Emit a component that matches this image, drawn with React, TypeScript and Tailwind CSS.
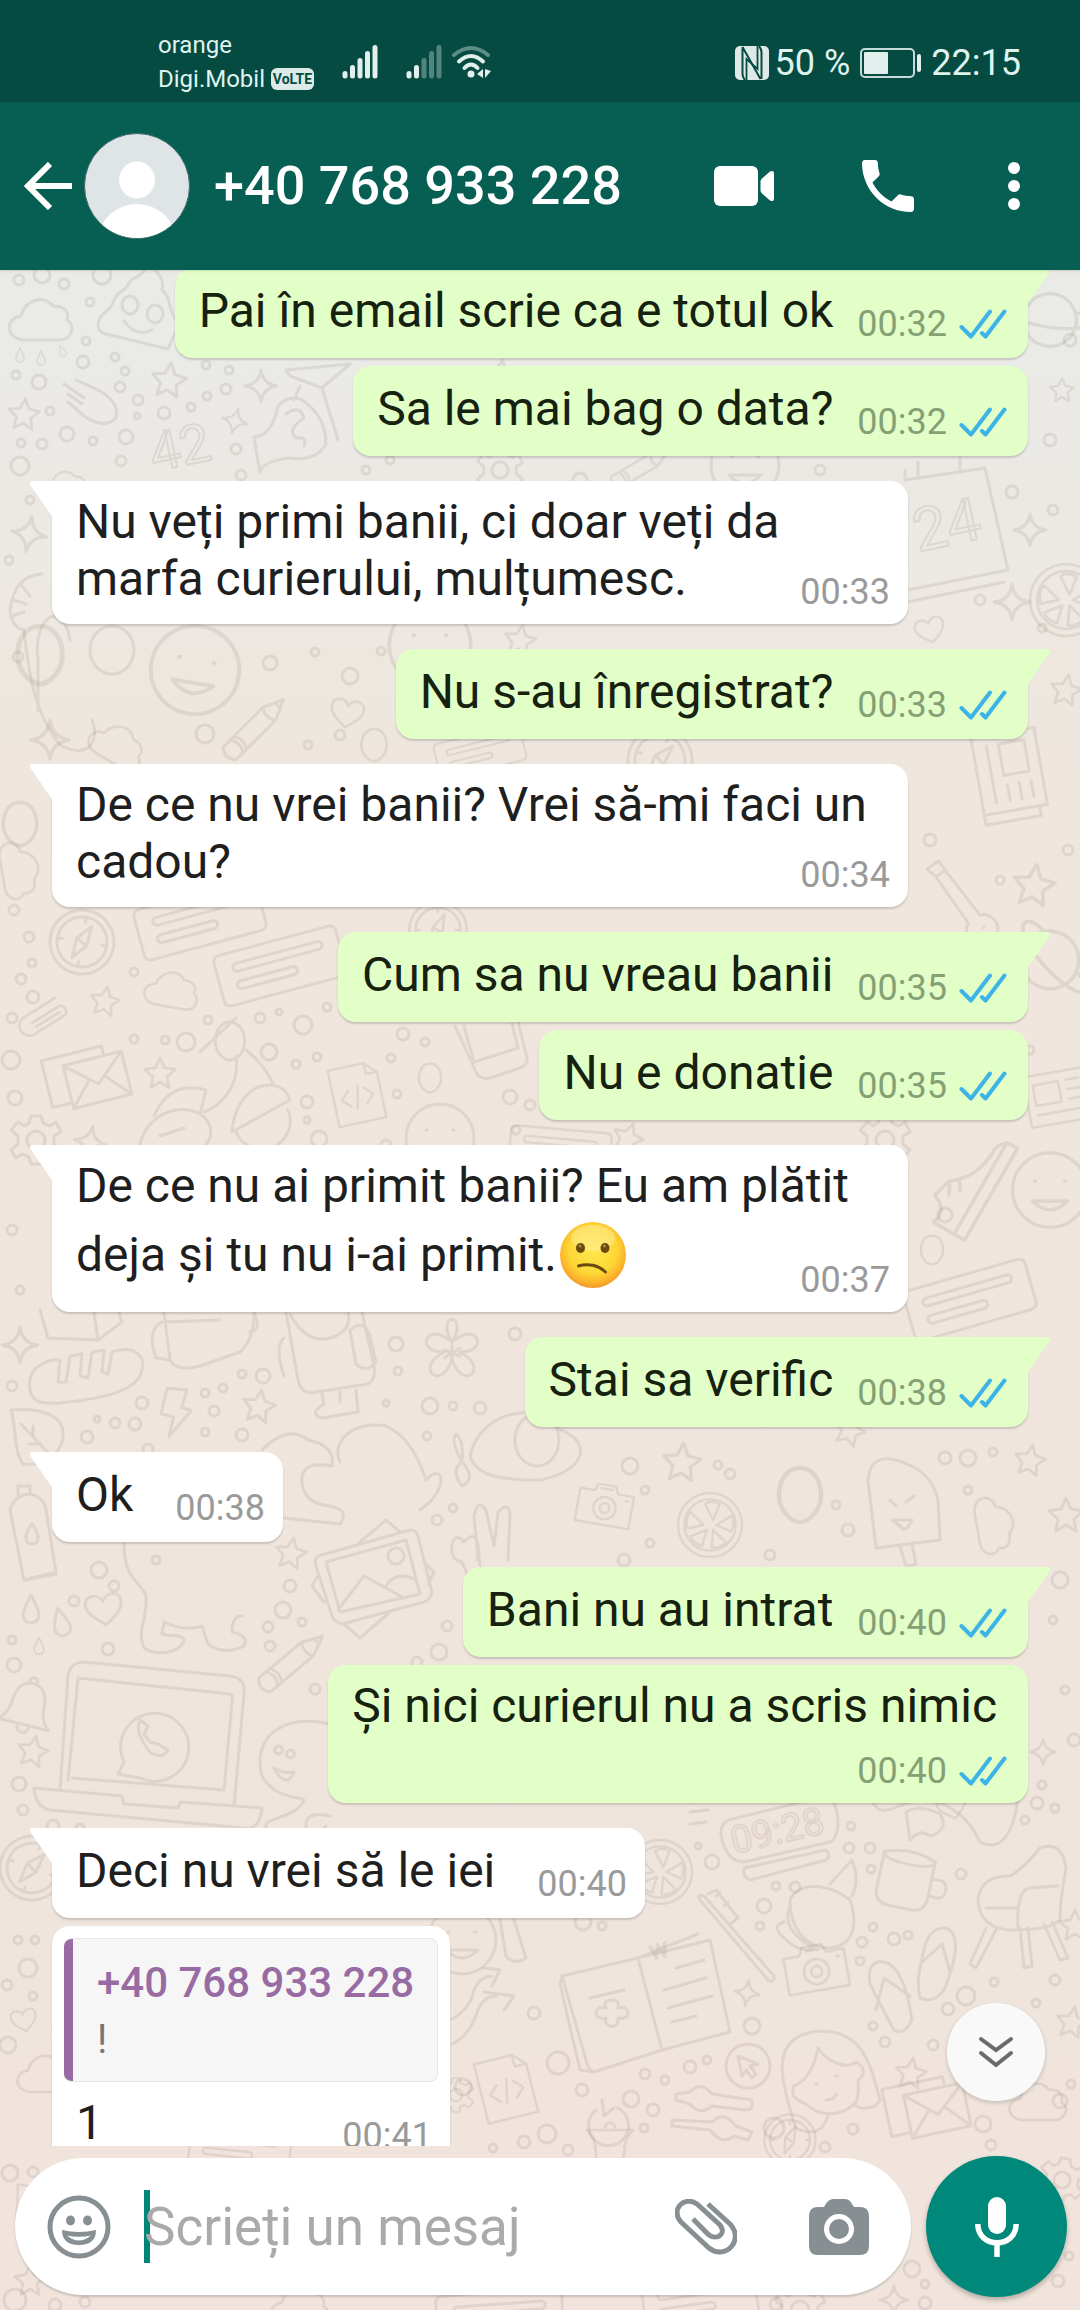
import { ReactNode, useState } from 'react'

type Message = {
  text: ReactNode
  time: string
  sent?: boolean
  first?: boolean
  stacked?: boolean
  quote?: { name: string; text: string }
}

const messages: Message[] = [
  { text: 'Pai în email scrie ca e totul ok', time: '00:32', sent: true, first: true },
  { text: 'Sa le mai bag o data?', time: '00:32', sent: true },
  { text: 'Nu veți primi banii, ci doar veți da marfa curierului, mulțumesc.', time: '00:33', first: true },
  { text: 'Nu s-au înregistrat?', time: '00:33', sent: true, first: true },
  { text: 'De ce nu vrei banii? Vrei să-mi faci un cadou?', time: '00:34', first: true },
  { text: 'Cum sa nu vreau banii', time: '00:35', sent: true, first: true },
  { text: 'Nu e donatie', time: '00:35', sent: true },
  { text: <>De ce nu ai primit banii? Eu am plătit deja și tu nu i-ai primit.<ConfusedFace /></>, time: '00:37', first: true },
  { text: 'Stai sa verific', time: '00:38', sent: true, first: true },
  { text: 'Ok', time: '00:38', first: true },
  { text: 'Bani nu au intrat', time: '00:40', sent: true, first: true },
  { text: 'Și nici curierul nu a scris nimic', time: '00:40', sent: true, stacked: true },
  { text: 'Deci nu vrei să le iei', time: '00:40', first: true },
  { text: '1', time: '00:41', quote: { name: '+40 768 933 228', text: '!' } },
]

function ConfusedFace() {
  return (
    <svg role="img" aria-label="confused face" className="inline-block w-[70px] h-[81px] align-[-24px]" viewBox="0 0 70 81">
      <defs>
        <radialGradient id="face" cx="50%" cy="42%" r="60%">
          <stop offset="0" stopColor="#ffe74f" />
          <stop offset="0.6" stopColor="#fdd835" />
          <stop offset="0.85" stopColor="#fbb02a" />
          <stop offset="1" stopColor="#ee8f2c" />
        </radialGradient>
      </defs>
      <circle cx="36" cy="41" r="33" fill="url(#face)" />
      <ellipse cx="36" cy="24" rx="22" ry="13" fill="#fff" opacity="0.25" />
      <ellipse cx="23.500" cy="34" rx="4.500" ry="5" fill="#6b4a0e" />
      <ellipse cx="48" cy="34" rx="4.500" ry="5" fill="#6b4a0e" />
      <circle cx="23" cy="32" r="1.500" fill="#b08a3a" />
      <circle cx="47.500" cy="32" r="1.500" fill="#b08a3a" />
      <path d="M21.500 52c9-3 20-1 27 6" fill="none" stroke="#6b4a0e" strokeWidth="3" strokeLinecap="round" />
    </svg>
  )
}

const shapes: Record<string, string> = {
  star: 'M0-17L5-6 17-4 8 4 10 16 0 10-10 16-8 4-17-4-5-6z',
  spark: 'M0-16Q2-2 16 0 2 2 0 16-2 2-16 0-2-2 0-16z',
  heart: 'M0 16C-12 7-18 2-18-6-18-16-4-17 0-8 4-17 18-16 18-6 18 2 12 7 0 16z',
  drop: 'M0-14C5-4 8 1 8 6a8 8 0 0 1-16 0C-8 1-5-4 0-14z',
  cloud: 'M-18 20C-36 18-36-2-20-4-16-20 2-26 12-14 26-14 28-6 26 0 36 6 30 20 18 20z',
  bolt: 'M-10-24H10L6-6 16-4-4 24-1 4-14 2z',
  envelope: 'M-34-24H28V-14M-34-24V24H-14M-14-14H46V30H-14zM-14-14L16 12 46-14M-14 30L8 6M46 30L24 6',
  compass: 'M32 0A32 32 0 1 1-32 0 32 32 0 1 1 32 0zM25 0A25 25 0 1 1-25 0 25 25 0 1 1 25 0zM7-17L5 3-7 17-6-3zM-6-3L5 3M0-25V-20M0 25V20M-25 0H-20M25 0H20',
  card: 'M-56-26H56q7 0 7 7V19q0 7-7 7H-56q-7 0-7-7V-19q0-7 7-7zM-42-14H42a4 4 0 0 1 0 8H-42a4 4 0 0 1 0-8zM-42 4H12a4 4 0 0 1 0 8H-42a4 4 0 0 1 0-8z',
  flower: 'M0-8C-18-38 18-38 0-8 26-30 38 2 8 2 38 18 12 42 0 10-12 42-38 18-8 2-38 2-26-30 0-8zM0-6V10M-8 0L8 6M8-2L-8 8',
  pencil: 'M-36-9H20L40 0 20 9H-36q-8-9 0-18zM-26-9q6 9 0 18M-21-9q6 9 0 18M20-9q-6 9 0 18M32-4V4',
  clip: 'M-16-6H18a6 6 0 0 1 0 12H-20a11 11 0 0 1 0-22H20M-14 0H16',
  gear: 'M-5-24H5L7-17 14-14 20-18 25-8 18-4V4L25 10 18 18 12 14 6 17 5 24H-5L-7 17-14 14-20 18-25 10-18 4V-4L-25-10-18-18-12-14-7-17zM9 0A9 9 0 1 1-9 0 9 9 0 1 1 9 0z',
  mug: 'M-26-24Q0-34 26-24 26-16 0-16-26-16-26-24zM-26-24V16q2 12 14 12H12q12 0 14-12V-24M26-6q16-4 16 8T26 10',
  camera: 'M-34-16H-16L-12-25H10L14-16H34V25H-34zM14 4A14 14 0 1 1-14 4 14 14 0 1 1 14 4zM6 4A6 6 0 1 1-6 4 6 6 0 1 1 6 4zM-8-20H6M25-9h2',
  bell: 'M-26 20Q-16 12-16-4-14-22 0-22 14-22 16-4 16 12 26 20zM-6 20q0 8 6 8t6-8M-4-24a4 4 0 1 1 8 0',
  leaf: 'M-26-28C2-30 28-24 26-2 24 20 2 28-14 26-24 12-20-8-26-28zM-16-14L14 18M-4-2V-12M4 6H-8',
  note: 'M-30-36H16L30-22V36H-30zM16-36V-22H30M-10-6L-20 4-10 14M10-6L20 4 10 14M3-10L-3 18',
  face: 'M34 0A34 34 0 1 1-34 0 34 34 0 1 1 34 0zM-14-8h1M13-8h1M-16 10Q0 26 16 10z',
  egg: 'M0-18C10-18 14-8 14 0 14 10 6 18 0 18S-14 10-14 0C-14-8-10-18 0-18z',
  guitar: 'M-30 20C-44 4-26-8-16-4L24-44 32-36-6 6C0 18-16 36-30 20zM24-44L30-54 40-44 32-36M-18 12h1',
  news: 'M-44-30H34V34H-44zM34-22H44V34H34M-34-18H-2V8H-34zM8-18H24M8-6H24M8 6H24M-34 20H24',
  shoe: 'M-44-6Q-30 0-24-16L-8-12Q6 8 34 8 46 10 44 24H-44zM-44 14H44M-18-6l8-4M-10 0l8-5',
  planet: 'M24 0A24 24 0 1 1-24 0 24 24 0 1 1 24 0zM-22-8C-50-2-40 16 4 6 46-4 46-22 20-14',
  melon: 'M40 0A40 40 0 1 1-40 0 40 40 0 1 1 40 0zM32 0A32 32 0 1 1-32 0 32 32 0 1 1 32 0zM4-6L12-26Q0-32-6-26zM8 0L28-12Q32 0 26 8zM4 6L20 22Q10 30 2 28zM-4 6L-10 26Q-22 22-24 14zM-8 0L-28 4Q-32-8-24-16z',
}

// [shape, x, y, rotation, scale]
const doodles: [string, number, number, number, number][] = [
  ['cloud', 41, 320, 0, 1], ['star', 169, 380, 8, 1], ['star', 24, 414, 5, 0.9], ['spark', 261, 386, 0, 1],
  ['spark', 235, 421, 15, 0.8], ['drop', 20, 355, 0, 0.5], ['drop', 41, 358, 0, 0.5], ['drop', 62, 351, -25, 0.4],
  ['cloud', 66, 486, 0, 0.7], ['spark', 29, 534, 10, 1.1], ['planet', 1050, 320, 20, 1.1], ['star', 1062, 390, 0, 0.7],
  ['spark', 1030, 530, 0, 1], ['spark', 1012, 602, 0, 1.1], ['melon', 1066, 600, 0, 0.9],
  ['face', 430, 645, 0, 1.2], ['heart', 930, 630, -15, 0.8], ['star', 520, 640, 10, 0.9], ['egg', 40, 655, 0, 1.6],
  ['face', 195, 670, 10, 1.3], ['heart', 347, 713, 10, 0.9], ['pencil', 255, 728, -45, 1], ['spark', 50, 740, 0, 1.2],
  ['cloud', 118, 745, 30, 0.9], ['egg', 374, 745, 0, 0.9], ['news', 1012, 776, 80, 1], ['star', 1066, 690, 10, 0.9],
  ['card', 480, 752, -14, 0.7], ['compass', 660, 760, 20, 1], ['star', 1034, 885, 8, 1.2], ['guitar', 975, 908, -80, 1],
  ['egg', 20, 824, 0, 1.2], ['cloud', 20, 870, 80, 0.9], ['compass', 82, 942, 10, 1], ['card', 200, 920, -15, 1],
  ['card', 280, 966, -15, 1], ['cloud', 172, 990, 10, 0.85], ['star', 105, 1001, 10, 0.85], ['clip', 47, 1020, -32, 0.9],
  ['envelope', 80, 1076, -14, 1], ['star', 160, 1073, 0, 0.9], ['gear', 36, 1140, 0, 1], ['spark', 90, 1142, 10, 1],
  ['note', 357, 1094, -12, 0.8], ['egg', 430, 1078, 0, 0.8], ['face', 440, 1138, 0, 1], ['compass', 438, 930, 0, 0.9],
  ['planet', 1050, 960, 60, 1.2], ['news', 1062, 1095, -10, 0.8], ['shoe', 966, 1180, -60, 1.2], ['face', 1050, 1190, 0, 1.1],
  ['card', 560, 1150, 5, 0.8], ['gear', 885, 1140, 0, 1], ['star', 628, 1138, 20, 0.9], ['egg', 932, 1250, 0, 0.8],
  ['card', 970, 1300, -16, 1], ['spark', 20, 1345, 0, 1.1], ['flower', 452, 1350, 0, 1], ['bolt', 175, 1413, 5, 1],
  ['star', 259, 1406, 10, 0.95], ['leaf', 37, 1438, 0, 1], ['star', 682, 1462, 5, 1.1], ['star', 1030, 1460, 10, 0.9],
  ['star', 850, 1430, 20, 0.9], ['camera', 605, 1505, 10, 0.8], ['melon', 710, 1525, 0, 0.8], ['egg', 800, 1495, 0, 1.5],
  ['cloud', 995, 1525, 80, 0.9], ['star', 1066, 1515, 0, 1], ['star', 291, 1553, 10, 0.9],
  ['drop', 31, 1609, 0, 1], ['drop', 61, 1622, -15, 1], ['drop', 39, 1646, 0, 0.6], ['heart', 104, 1609, -8, 1],
  ['pencil', 292, 1662, -40, 1], ['bell', 28, 1705, 14, 1], ['star', 33, 1751, 12, 0.9],
  ['spark', 1043, 1752, 0, 0.8], ['compass', 32, 1868, 20, 1], ['heart', 24, 2020, -12, 0.7], ['cloud', 46, 2074, 0, 0.9],
  ['melon', 660, 1872, 0, 0.8], ['mug', 905, 1880, 12, 1], ['camera', 816, 1968, -10, 0.9], ['spark', 747, 1993, 8, 0.8],
  ['note', 506, 2088, -14, 0.85], ['gear', 456, 2095, 0, 0.7], ['face', 462, 1940, 0, 1], ['star', 911, 2073, 8, 0.9],
  ['envelope', 920, 2106, -12, 1], ['cloud', 1038, 2102, 0, 0.9], ['star', 1075, 1925, 0, 0.9], ['star', 1072, 2022, 10, 0.9],
  ['gear', 1062, 2180, 10, 0.9], ['spark', 894, 2300, 0, 0.9], ['card', 700, 2300, -8, 0.9], ['cloud', 300, 2306, 0, 0.9],
  ['gear', 800, 2310, 0, 1], ['card', 500, 2318, -4, 1], ['leaf', 34, 2210, 10, 0.8], ['bell', 610, 2148, 180, 0.9],
  ['compass', 790, 2140, 0, 0.8], ['card', 240, 2148, 6, 0.8], ['star', 30, 2280, 0, 0.9], ['heart', 952, 1806, -15, 0.8],
  ['star', 500, 375, 10, 0.9], ['gear', 500, 470, 0, 0.9], ['face', 745, 465, 0, 1], ['pencil', 640, 468, -30, 0.8],
]

// larger drawings, laid straight on the wallpaper
const scenes = [
  // pile, hand, rocket
  'M98 325C98 312 112 312 114 300 118 290 128 290 128 284 132 276 142 278 148 266 162 272 164 284 162 290 170 296 168 304 172 312L178 326 168 349 106 334Q98 332 98 325zM138 305a8 9 0 1 1-16 0 8 9 0 1 1 16 0zM163 314a8 9 0 1 1-16 0 8 9 0 1 1 16 0zM124 321Q136 338 152 330',
  'M64 384L84 398M68 394L82 404M76 380L98 390Q120 402 116 418 104 430 84 416L68 402',
  'M254 437Q272 436 278 406 290 394 302 400 326 416 326 444 316 462 288 458 262 462 260 472 256 450 254 437zM286 414Q300 404 304 418 286 430 296 438 308 436 304 446M286 370L350 364 322 388 290 376zM300 386L294 400M322 388L338 440',
  // dinosaur and calendar around the first white bubble
  'M42 574Q14 576 10 610 12 628 24 630M22 586l8 10M14 600l12 4M12 616l12-4M24 630C30 690 40 720 60 745 90 760 100 740 92 720M70 640a14 28 0 0 0-32 20V710M134 650a22 24 0 1 1-44 0 22 24 0 1 1 44 0',
  'M905 480L985 468 1008 570 908 590M908 602L1004 582M905 480V470M918 476V462M960 472V458',
  // scooter
  'M200 1052L236 1018M218 1030a14 18 0 1 1 24 22 14 18 0 1 1-24-22M236 1056C240 1084 224 1104 204 1112M246 1050Q266 1066 274 1086M154 1116Q170 1080 206 1090L200 1114M140 1144C150 1104 200 1100 210 1126 214 1144 200 1150 190 1150M232 1132C236 1080 282 1074 290 1100L232 1132zM288 1110a28 28 0 1 1-52 22M160 1136l24-8',
  // phone
  'M455 1026L476 1072Q480 1080 490 1078L520 1068Q530 1064 526 1054L518 1022M464 1026L474 1062 518 1048 512 1024',
  // bread, backpack, robot, parcel
  'M30 1390C26 1366 50 1358 60 1360L58 1382 66 1382 70 1356 82 1354 80 1376 88 1378 92 1352 104 1350 102 1372 108 1374 112 1352C136 1344 146 1358 142 1370 138 1394 90 1400 60 1403 40 1404 32 1402 30 1390z',
  'M40 1310L48 1338 98 1340 94 1312M98 1340L122 1322 118 1310M164 1312L170 1360Q176 1372 200 1366L240 1352Q254 1340 254 1312M162 1322Q146 1330 156 1358L170 1360M254 1312Q262 1330 250 1332M166 1322L220 1320',
  'M286 1312L298 1380Q302 1396 316 1392L368 1384Q376 1380 374 1366L362 1312M290 1314Q308 1348 336 1336 352 1328 348 1312M350 1330Q364 1318 370 1336L376 1362Q366 1374 356 1364zM284 1338Q274 1346 284 1376M322 1394L324 1404Q308 1414 322 1418L358 1412 356 1390M340 1392V1402',
  // hands making a heart
  'M262 1450Q288 1424 308 1440 336 1446 332 1466 300 1460 302 1482 304 1504 330 1506 350 1510 340 1524L284 1518M340 1462C330 1440 356 1420 386 1426 416 1440 424 1476 426 1480 444 1460 450 1490 420 1510 400 1510 406 1498M406 1498C380 1500 360 1530 350 1518 352 1500 372 1500 380 1480 376 1450 350 1470 340 1462zM341 1490C330 1480 328 1474 334 1472L341 1476 350 1472C358 1476 350 1484 341 1490z',
  // ladybird
  'M470 1456C480 1410 540 1400 560 1430 590 1440 590 1470 540 1480 500 1480 476 1476 470 1456zM515 1440a22 26 0 1 0 44 0 22 26 0 1 0-44 0M462 1462Q450 1440 456 1434 464 1440 462 1462 450 1470 462 1486 476 1480 464 1464',
  // victory hand, bottle, ice lolly
  'M478 1560L474 1516Q478 1498 486 1510L494 1546 498 1512Q510 1500 510 1516L508 1560M452 1544Q456 1532 464 1542 474 1530 478 1544L480 1566M452 1544Q450 1560 462 1562L468 1576',
  'M10 1510Q14 1496 28 1494 44 1496 46 1510L56 1572 24 1580zM18 1494V1486H30V1494M26 1580L56 1574M32 1524c8 10 8 20 0 20s-8-10 0-20z',
  'M868 1480Q870 1454 896 1460 932 1470 938 1500L940 1540 876 1548zM890 1500l6 6M914 1496l-8 6M892 1520h20q-6 14-12 6zM900 1546l6 20 10-2-4-20',
  // dog
  'M124 1544C124 1580 140 1580 146 1596 148 1620 136 1630 144 1648 156 1656 180 1654 184 1640 180 1632 172 1638 162 1634L164 1622Q184 1632 202 1626L208 1644Q224 1656 244 1646 250 1636 232 1632 232 1616 242 1616 240 1590M134 1544Q140 1580 178 1578M190 1554Q200 1540 230 1542 260 1556 262 1574 258 1590 214 1594M188 1554Q174 1566 184 1590 194 1600 206 1596 216 1576 206 1554 198 1550 188 1554M246 1564q6-6 8 2-4 6-8-2M250 1572v6q-4 2-4-2M234 1558h1',
  // framed pictures
  'M318 1556L410 1530Q416 1530 418 1536L432 1592Q430 1600 424 1602L342 1624Q334 1622 332 1616L316 1566Q314 1558 318 1556zM326 1562L406 1540 420 1594 340 1612zM338 1610L364 1576 404 1598M386 1586Q396 1570 416 1580M404 1556a8 8 0 1 1-16 0 8 8 0 1 1 16 0M360 1542L386 1520 400 1532M424 1562L434 1572 428 1584M344 1624L360 1638 390 1612M318 1576L312 1586 324 1602',
  // laptop
  'M60 1790L68 1676Q70 1662 84 1662L230 1676Q246 1678 244 1694L234 1806M68 1780L78 1678 230 1694Q234 1696 232 1702L224 1790 72 1778M34 1788L122 1796 124 1804 178 1808 180 1802 262 1808Q260 1830 244 1828L50 1810Q36 1808 34 1788zM124 1762A34 34 0 1 1 140 1778L118 1774zM140 1720Q134 1732 150 1752 162 1760 168 1750L158 1744 150 1742 144 1734 148 1726z',
  // ghost
  'M330 1724C280 1712 252 1740 262 1776 276 1800 300 1796 304 1800 296 1820 262 1816 266 1828 276 1834 286 1830 280 1844M330 1816Q304 1810 306 1828 316 1836 326 1826M278 1746a4 4 0 1 0 1 0M290 1750a4 4 0 1 0 1 0M274 1768Q284 1774 294 1772 286 1790 274 1768z',
  // alarm clock
  'M728 1820L826 1796Q838 1800 838 1826 836 1840 830 1842L744 1862Q728 1862 722 1840 718 1826 728 1820zM744 1868L826 1850Q832 1856 826 1860L750 1880Q742 1876 744 1868z',
  // toothbrush, croissant, chair
  'M700 1900Q696 1894 704 1896L774 1976Q774 1984 768 1980zM708 1894L716 1890 738 1918 730 1924M716 1896l4-4M724 1906l4-4',
  'M790 1900C800 1880 830 1884 850 1900 860 1930 850 1948 826 1948 806 1946 790 1930 790 1900zM790 1906Q780 1930 814 1948 800 1954 784 1938 770 1926 784 1922M830 1884Q846 1866 852 1860 860 1880 852 1896',
  'M978 1900Q980 1876 1010 1876 1024 1868 1040 1848 1062 1840 1066 1868 1060 1900 1060 1920 1050 1930 1014 1930 980 1930 978 1900zM1018 1928Q1016 1890 1030 1888L1058 1886M986 1908h32M986 1928L970 1964 976 1968 996 1930M1020 1928L1024 1968 1032 1966 1028 1928M1044 1924L1060 1960 1068 1958 1052 1922',
  // open diary
  'M562 1976L638 1958 662 2050 594 2072Q588 2070 586 2060zM638 1958L710 1940 730 2032 662 2050M562 1976L560 1984 580 2070 594 2072M638 1958L698 1934M590 1998L624 1990M676 1968L704 1960M664 1990L706 1978M668 2008L712 1996M672 2022L696 2016M612 2000q8 0 6 8 10-2 10 6-2 6-10 4 0 10-8 8-6-2-4-8-10 2-10-6 2-6 10-4-4-8 6-8z',
  // cursor, refresh, sliders
  'M770 2066a22 22 0 1 1-44 0 22 22 0 1 1 44 0M738 2056L742 2076 746 2070 752 2078 756 2074 750 2066 758 2064zM618 2108A20 20 0 1 1 596 2110M602 2100L604 2116 614 2108M676 2094L690 2092Q700 2080 712 2094L752 2100Q754 2110 746 2110L712 2106Q700 2116 690 2104L676 2100zM672 2120L712 2122Q724 2110 736 2126L752 2132 748 2140 734 2136Q722 2146 710 2130L672 2126z',
  // girl, flip-flops
  'M796 2128C780 2080 770 2040 812 2032 860 2026 870 2060 880 2100 876 2110 858 2110 854 2104 842 2116 820 2118 806 2104 796 2100 790 2096 794 2086 812 2080 818 2050 818 2048 830 2066 850 2068 856 2062 870 2070 860 2080 858 2080 860 2100 854 2106 854 2104M796 2128Q820 2140 828 2116M816 2084h1M836 2076h1M826 2100q8 0 10-6',
  'M870 1984Q866 1960 884 1962 904 1966 912 2020 904 2036 894 2030 880 2004 870 1984zM884 1978L876 2010M884 1978L910 1996M922 1960Q926 1926 946 1928 966 1936 944 1990 934 2004 920 1998 916 1980 922 1960zM942 1944L920 1964M942 1944L950 1972',
  // arrows, spoon
  'M450 2020Q470 2010 474 1990 480 1976 492 1976M484 1968L500 1970 492 1986M452 2044Q470 2036 478 2010 484 1996 496 1996M484 1992L514 1996 504 2010M500 1920L506 1956Q514 1966 526 1958L514 1920',
  'M660 1800Q680 1796 690 1802M690 1812l18-2M690 1824l16-2M870 1796C880 1826 900 1800 920 1800 950 1800 970 1820 980 1842 1000 1852 1014 1836 1018 1796M906 1812Q920 1804 940 1814 950 1830 930 1836 920 1828 910 1840z',
]

const dots = [
  19, 280, 5, 42, 275, 8, 64, 284, 5, 102, 275, 9, 90, 302, 4, 86, 341, 4, 83, 362, 6, 115, 357, 4, 125, 371, 4, 16, 375, 4,
  39, 382, 7, 120, 387, 5, 50, 411, 4, 138, 400, 5, 137, 416, 3, 67, 434, 7, 21, 443, 4, 42, 444, 5, 93, 441, 4, 126, 437, 7,
  20, 466, 9, 121, 461, 5, 164, 413, 6, 191, 407, 4, 207, 396, 4, 226, 389, 5, 229, 370, 4, 206, 365, 4, 236, 449, 5, 241, 475, 5,
  30, 500, 4, 9, 560, 4, 18, 657, 5, 381, 651, 4, 315, 652, 4, 270, 663, 7, 1070, 340, 6, 1050, 440, 6, 1012, 492, 6, 1053, 510, 5,
  1042, 628, 4, 980, 600, 5, 390, 460, 4, 366, 470, 4, 580, 480, 7, 820, 470, 5, 350, 676, 8, 205, 734, 9, 340, 735, 5, 308, 745, 4,
  1000, 880, 4, 930, 840, 6, 1068, 850, 5, 14, 910, 5, 29, 937, 5, 32, 963, 4, 21, 979, 5, 33, 997, 6, 12, 1018, 5, 134, 972, 4,
  208, 1020, 4, 186, 1042, 9, 165, 1040, 4, 134, 1039, 4, 260, 1018, 5, 303, 1025, 9, 327, 1007, 4, 279, 1012, 3, 269, 1052, 8, 296, 1064, 4,
  317, 1057, 4, 391, 1058, 4, 307, 1102, 6, 397, 1094, 4, 319, 1139, 8, 307, 1120, 3, 386, 1145, 5, 403, 1034, 6, 425, 1042, 4,
  11, 1060, 9, 15, 1098, 7, 510, 1097, 7, 530, 1105, 5, 516, 1130, 4, 990, 1060, 6, 1030, 1050, 4, 12, 1230, 5, 945, 1215, 7, 20, 1290, 4,
  12, 1386, 5, 142, 1403, 6, 135, 1424, 6, 115, 1423, 5, 97, 1419, 3, 87, 1437, 6, 148, 1449, 5, 205, 1393, 4, 223, 1388, 4, 242, 1374, 4,
  263, 1376, 7, 214, 1411, 5, 205, 1432, 4, 242, 1435, 6, 396, 1344, 7, 398, 1371, 4, 386, 1403, 3, 430, 1406, 8, 453, 1406, 4, 480, 1408, 6,
  427, 1436, 4, 515, 1334, 6, 437, 1520, 5, 453, 1508, 4, 99, 1570, 8, 114, 1586, 5, 74, 1601, 5, 156, 1560, 4, 290, 1586, 6, 283, 1610, 8,
  302, 1622, 4, 268, 1627, 5, 270, 1646, 5, 108, 1649, 6, 12, 1640, 4, 14, 1665, 7, 447, 1626, 5, 439, 1652, 8, 417, 1662, 5, 315, 1689, 5,
  19, 1784, 7, 23, 1810, 5, 53, 1826, 6, 80, 1828, 4, 630, 1466, 8, 645, 1490, 4, 718, 1465, 4, 730, 1474, 5, 836, 1505, 4, 945, 1458, 6,
  968, 1458, 8, 993, 1452, 4, 968, 1490, 4, 848, 1530, 6, 650, 1543, 4, 624, 1560, 6, 770, 1555, 5, 1060, 1580, 8, 1053, 1620, 4, 1065, 1690, 4,
  1042, 1785, 4, 1037, 1803, 6, 1055, 1808, 4, 1025, 1820, 4, 1074, 1740, 6, 18, 1940, 4, 35, 1940, 4, 28, 1968, 9, 7, 1985, 5, 33, 1996, 4,
  8, 2045, 8, 463, 2087, 8, 493, 2148, 4, 524, 2142, 6, 534, 2013, 6, 583, 1922, 8, 602, 1926, 4, 712, 1862, 7, 698, 1846, 3, 851, 1826, 4,
  849, 1848, 5, 870, 1848, 5, 871, 1869, 4, 961, 1874, 5, 764, 1906, 7, 776, 1886, 4, 795, 1887, 5, 760, 1926, 4, 873, 1927, 4, 894, 1939, 6,
  908, 1935, 4, 862, 1942, 5, 860, 1961, 4, 966, 1996, 9, 994, 1982, 4, 948, 2009, 6, 1036, 2003, 4, 1055, 1980, 5, 885, 2042, 5, 873, 2026, 4,
  752, 2026, 8, 933, 2045, 5, 690, 2067, 6, 707, 2060, 4, 645, 2074, 5, 665, 2080, 4, 558, 2063, 11, 582, 2090, 6, 631, 2099, 8, 653, 2110, 6,
  644, 2128, 4, 547, 2134, 9, 568, 2150, 5, 774, 2128, 10, 853, 2129, 5, 825, 2147, 5, 983, 2124, 8, 991, 2145, 5, 1060, 2101, 7, 1071, 2084, 4,
  912, 2269, 8, 925, 2284, 4, 1058, 2281, 6, 1069, 2256, 4, 15, 2300, 11, 55, 2305, 6, 85, 2302, 5, 776, 2304, 6, 925, 2303, 6, 10, 2173, 8, 33, 2172, 5,
]

function Wallpaper() {
  const circles = []
  for (let i = 0; i < dots.length; i += 3) {
    circles.push(<circle key={i} cx={dots[i]} cy={dots[i + 1]} r={dots[i + 2]} />)
  }
  return (
    <svg aria-hidden="true" className="absolute inset-0 w-full h-full" viewBox="0 0 1080 2310" preserveAspectRatio="xMidYMin slice">
      <g fill="none" stroke="#8f8378" strokeOpacity="0.17" strokeWidth="3" strokeLinecap="round" strokeLinejoin="round">
        {circles}
        {scenes.map((d, i) => <path key={i} d={d} />)}
        {doodles.map(([name, x, y, rotation, scale], i) => (
          <path key={i} d={shapes[name]} transform={`translate(${x} ${y}) rotate(${rotation}) scale(${scale})`} />
        ))}
        <g strokeWidth="2">
          <text transform="translate(154 472) rotate(-12)" fontSize="54">42</text>
          <text transform="translate(918 552) rotate(-12)" fontSize="60">24</text>
          <text transform="translate(734 1854) rotate(-13)" fontSize="38">09:28</text>
          <text transform="translate(652 1960) rotate(-14)" fontSize="20">W</text>
        </g>
      </g>
    </svg>
  )
}

function SignalBars({ active }: { active: number }) {
  return (
    <svg aria-hidden="true" className="w-9 h-9" viewBox="0 0 36 36" stroke="#e2efec" strokeWidth="5" strokeLinecap="round">
      {[29.5, 23.5, 16.5, 9.5, 3.5].map((y, i) => (
        <path key={i} d={`M${3 + i * 7.5} ${y}V32`} opacity={i < active ? 1 : 0.35} />
      ))}
    </svg>
  )
}

function StatusBar() {
  return (
    <div className="h-[102px] shrink-0 flex items-start justify-between bg-[#064b42] text-[#dff3ef] pl-[158px] pr-[59px]">
      <div className="flex items-start">
        <div className="pt-7 text-2xl leading-[34px]">
          <p>orange</p>
          <p className="flex items-center gap-[6px]">
            Digi.Mobil
            <span className="w-[43px] h-[22px] rounded-md bg-[#dcebe7] text-[#064b42] text-center text-sm leading-[22px] font-bold">VoLTE</span>
          </p>
        </div>
        <div className="pt-11 pl-7 flex">
          <SignalBars active={5} />
          <div className="w-7" />
          <SignalBars active={2} />
          <svg aria-hidden="true" className="w-[44px] h-9 ml-2" viewBox="0 0 44 36" fill="none" stroke="#e2efec" strokeWidth="4" strokeLinecap="round">
            <path d="M4 11Q21-3 38 11" opacity="0.4" />
            <path d="M9 17.500Q21 6.500 33 17.500M14.500 24Q21 17 27.500 24" />
            <circle cx="21" cy="30" r="3.500" fill="#e2efec" stroke="none" />
            <path d="M33 25v9l-6-4zM35 25v9l6-7z" fill="#e2efec" stroke="none" />
          </svg>
        </div>
      </div>
      <div className="pt-[42px] flex items-center text-4xl leading-[42px]">
        <svg aria-hidden="true" className="w-[34px] h-[34px]" viewBox="0 0 34 34">
          <rect width="34" height="34" rx="5" fill="#dfe9e7" />
          <path d="M7.500 1V28Q7.500 31 10 34M7.500 1L25.500 33M26.500 33V6Q26.500 3 24 0" fill="none" stroke="#064b42" strokeWidth="2" />
          <path d="M11.500 34V13L22.500 23V0" fill="none" stroke="#064b42" strokeWidth="1.800" />
        </svg>
        <span className="pl-[6px] pr-[10px]">50 %</span>
        <svg aria-hidden="true" className="w-[62px] h-[30px]" viewBox="0 0 62 30">
          <rect x="1" y="1" width="53" height="28" rx="4" fill="none" stroke="#c4dbd7" strokeWidth="2" />
          <rect x="4" y="4" width="24" height="22" rx="1" fill="#e2efec" />
          <rect x="57" y="6" width="4" height="18" rx="2" fill="#e2efec" />
        </svg>
        <span className="pl-[9px]">22:15</span>
      </div>
    </div>
  )
}

function ChatHeader() {
  return (
    <header className="relative h-[168px] shrink-0 flex items-center bg-[#075f54] text-white pl-6 pr-[54px] shadow-sm">
      <button aria-label="Back" className="w-[60px]">
        <svg className="w-12 h-12" viewBox="0 0 48 48" fill="none" stroke="currentColor" strokeWidth="6">
          <path d="M48 24H5M26 2L4 24 26 46" />
        </svg>
      </button>
      <svg aria-hidden="true" className="w-[106px] h-[106px]" viewBox="0 0 106 106">
        <defs>
          <clipPath id="avatar"><circle cx="53" cy="53" r="52" /></clipPath>
        </defs>
        <circle cx="53" cy="53" r="52.500" fill="#dfe5e7" stroke="#3f6b66" />
        <g clipPath="url(#avatar)" fill="#fff">
          <ellipse cx="53" cy="47" rx="18" ry="18.500" />
          <ellipse cx="53" cy="106" rx="38" ry="35" />
        </g>
      </svg>
      <h1 className="flex-1 pl-6 text-[54px] leading-[64px] font-medium">+40 768 933 228</h1>
      <button aria-label="Video call">
        <svg className="w-[60px] h-10" viewBox="0 0 60 40" fill="currentColor">
          <rect width="44" height="40" rx="6" />
          <path d="M46.500 15.500Q46.500 14 48 12.500L56 5.500Q60 3.500 60 8V32Q60 36.500 56 34.500L48 27.500Q46.500 26 46.500 24.500z" />
        </svg>
      </button>
      <button aria-label="Call" className="ml-[88px]">
        <svg className="w-[52px] h-[52px]" viewBox="3 3 18 18" fill="currentColor">
          <path d="M6.620 10.790c1.440 2.830 3.760 5.140 6.590 6.590l2.200-2.200c.27-.27.670-.36 1.020-.24 1.120.37 2.330.57 3.570.57.550 0 1 .45 1 1V20c0 .55-.45 1-1 1-9.390 0-17-7.610-17-17 0-.55.450-1 1-1h3.500c.55 0 1 .45 1 1 0 1.250.2 2.450.57 3.570.11.350.030.740-.25 1.020l-2.200 2.200z" />
        </svg>
      </button>
      <button aria-label="More options" className="ml-[88px]">
        <svg className="w-[24px] h-12" viewBox="0 0 24 48" fill="currentColor">
          <circle cx="12" cy="6" r="6" />
          <circle cx="12" cy="24" r="6" />
          <circle cx="12" cy="42" r="6" />
        </svg>
      </button>
    </header>
  )
}

function ReadTicks() {
  return (
    <svg role="img" aria-label="Read" className="w-12 h-[30px]" viewBox="0 0 48 30" fill="none" stroke="#3db4e7" strokeWidth="4" strokeLinecap="round" strokeLinejoin="round">
      <path d="M2.500 18L12 27.500 31 2.500M23 24L26.500 27.500 45.500 2.500" />
    </svg>
  )
}

function Bubble({ message }: { message: Message }) {
  const { text, time, sent, first, stacked, quote } = message
  const long = typeof text !== 'string' || text.length > 40
  return (
    <li className={`flex ${sent ? 'justify-end' : 'justify-start'} ${first ? 'mt-[25px] first:mt-0' : 'mt-2'}`}>
      <div className={`relative max-w-[856px] min-h-[90px] flex flex-col justify-center rounded-[18px] shadow-[0_2px_2px_rgba(0,0,0,0.16)] ${
        sent ? 'bg-[#e1ffc7] text-[#16210f]' : 'bg-white text-[#1f1f1f]'} ${first ? (sent ? 'rounded-tr-none' : 'rounded-tl-none') : ''}`}>
        {first && (
          <svg aria-hidden="true" viewBox="0 0 22 36" className={`absolute top-0 w-[22px] h-9 ${
            sent ? 'left-full fill-[#e1ffc7]' : 'right-full fill-white -scale-x-100'}`}>
            <path d="M0 0H19Q24 0 21 5L0 35z" />
          </svg>
        )}
        {quote && (
          <blockquote className="mx-3 mt-3 w-[374px] rounded-lg overflow-hidden bg-[#f6f6f6] border border-[#e6e6e6] border-l-0 flex">
            <div className="w-[9px] bg-[#986ba4]" />
            <div className="pl-6 pt-[19px] pb-[17px]">
              <p className="text-[42px] leading-[50px] font-medium text-[#986ba4]">{quote.name}</p>
              <p className="mt-2 text-[40px] leading-[48px] text-[#777777]">{quote.text}</p>
            </div>
          </blockquote>
        )}
        <div className={`pl-6 ${sent ? 'pr-[21px]' : 'pr-[18px]'} ${stacked ? 'flex flex-col' : long ? 'grid' : `flex justify-between ${sent ? 'gap-6' : 'gap-[42px]'}`}`}>
          <p className={`pt-3 text-5xl leading-[57px] ${stacked ? 'pr-[10px] pb-4' : 'pb-[17px]'} ${long ? 'col-start-1 row-start-1' : ''}`}>{text}</p>
          <div className={`self-end pb-[11px] flex items-center gap-3 text-4xl leading-[42px] ${sent ? 'text-[#879f75]' : 'text-[#9a9a9a]'} ${
            long ? 'col-start-1 row-start-1 justify-self-end' : ''}`}>
            <time>{time}</time>
            {sent && <ReadTicks />}
          </div>
        </div>
      </div>
    </li>
  )
}

function Composer() {
  const [draft, setDraft] = useState('')
  return (
    <footer className="relative shrink-0 flex items-center gap-[15px] pt-[10px] pb-[13px] pl-[15px] pr-[13px]">
      <div className="flex-1 h-[137px] rounded-full bg-white shadow-[0_2px_2px_rgba(0,0,0,0.16)] flex items-center pl-8 pr-[42px] text-[#878f93]">
        <button aria-label="Emoji">
          <svg className="w-16 h-16" viewBox="0 0 64 64" fill="none" stroke="currentColor" strokeWidth="5">
            <circle cx="32" cy="32" r="29" />
            <ellipse cx="23.500" cy="25.500" rx="4.500" ry="5" fill="currentColor" stroke="none" />
            <ellipse cx="40.500" cy="25.500" rx="4.500" ry="5" fill="currentColor" stroke="none" />
            <path fillRule="evenodd" d="M15 35Q32 39 49 35 49 50 32 50 15 50 15 35zM20 40.500Q32 43 44 40.500 38 45.500 32 45.500 26 45.500 20 40.500z" fill="currentColor" stroke="none" />
          </svg>
        </button>
        <div className="relative flex-1 ml-[33px]">
          <span aria-hidden="true" className="absolute left-0 top-0 w-[6px] h-[73px] bg-[#008577]" />
          <input
            aria-label="Mesaj"
            className="relative w-full h-[73px] pt-[2px] text-[53px] text-[#1f1f1f] placeholder:text-[#aaaaaa] bg-transparent outline-none"
            placeholder="Scrieți un mesaj"
            value={draft}
            onChange={e => setDraft(e.target.value)}
          />
        </div>
        <button aria-label="Attach">
          <svg className="w-[62px] h-[56px]" viewBox="0 0 62 56" fill="none" stroke="currentColor" strokeWidth="5">
            <path d="M33 5L55 25C70 41 50 62 34 49L6 23C-5 11 9-4 22 5L44 25C53 34 42 42 34 36L18 20" />
          </svg>
        </button>
        <button aria-label="Camera" className="ml-[72px]">
          <svg className="w-[60px] h-[56px]" viewBox="0 0 60 56">
            <path d="M9 8H15Q18 2 21 1Q22 0 25 0H36Q39 0 41 2L45 8H51Q60 8 60 17V47Q60 56 51 56H9Q0 56 0 47V17Q0 8 9 8z" fill="currentColor" />
            <circle cx="30" cy="30" r="12.500" fill="none" stroke="#fff" strokeWidth="5" />
          </svg>
        </button>
      </div>
      <button aria-label="Voice message" className="w-[141px] h-[141px] rounded-full bg-[#00897b] flex items-center justify-center shadow-[0_3px_5px_rgba(0,0,0,0.25)]">
        <svg className="w-11 h-[62px]" viewBox="0 0 44 62" fill="none" stroke="#fff" strokeWidth="5.500">
          <rect x="13" y="1" width="18" height="37" rx="9" fill="#fff" stroke="none" />
          <path d="M2.800 28C3 53 41 53 41.200 28" />
          <path d="M22 46V61" />
        </svg>
      </button>
    </footer>
  )
}

export default function App() {
  return (
    <div className="relative h-screen flex flex-col overflow-hidden font-['Roboto',sans-serif] bg-gradient-to-b from-[#eaeae7] from-15% via-[#efe6dd] via-35% to-[#f0e4dc]">
      <Wallpaper />
      <div className="relative z-10 shrink-0">
        <StatusBar />
        <ChatHeader />
      </div>
      <main className="relative flex-1 min-h-0 overflow-hidden">
        <ul className="-mt-0.5 px-[52px]">
          {messages.map((m, i) => <Bubble key={i} message={m} />)}
        </ul>
        <button aria-label="Scroll to latest" className="absolute right-[35px] bottom-[45px] w-[98px] h-[98px] rounded-full bg-[#fafafa]/95 flex items-center justify-center shadow-[0_2px_4px_rgba(0,0,0,0.18)]">
          <svg className="w-9 h-9" viewBox="0 0 36 36" fill="none" stroke="#6b6b6b" strokeWidth="4" strokeLinecap="round">
            <path d="M3 5L18 16 33 5M3 19L18 31 33 19" />
          </svg>
        </button>
      </main>
      <Composer />
    </div>
  )
}
